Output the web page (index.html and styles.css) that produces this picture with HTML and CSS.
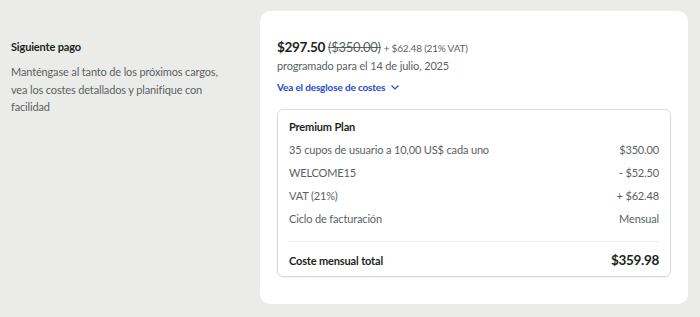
FILE: index.html
```html
<!DOCTYPE html>
<html lang="es">
<head>
  <meta charset="UTF-8" />
  <meta name="viewport" content="width=device-width, initial-scale=1.0" />
  <title>Siguiente pago</title>
  <link rel="stylesheet" href="styles.css">
</head>
<body>
  <div class="page">
    <div class="intro">
      <h2 class="intro-title">Siguiente pago</h2>
      <p class="intro-text">Manténgase al tanto de los próximos cargos, vea los costes detallados y planifique con facilidad</p>
    </div>

    <div class="card">
      <div class="price-line">
        <span class="price">$297.50</span>
        <span class="price-old">($350.00)</span>
        <span class="price-vat">+ $62.48 (21% VAT)</span>
      </div>
      <div class="scheduled">programado para el 14 de julio, 2025</div>
      <a class="breakdown-link" href="#">Vea el desglose de costes
        <svg width="10" height="10" viewBox="0 0 10 10" fill="none"><path d="M1.5 3.5 L5 7 L8.5 3.5" stroke="currentColor" stroke-width="1.2"/></svg>
      </a>

      <!-- desglose -->
      <div class="breakdown">
        <div class="plan-name">Premium Plan</div>
        <div class="row"><span>35 cupos de usuario a 10,00 US$ cada uno</span><span>$350.00</span></div>
        <div class="row"><span>WELCOME15</span><span>- $52.50</span></div>
        <div class="row"><span>VAT (21%)</span><span>+ $62.48</span></div>
        <div class="row"><span>Ciclo de facturación</span><span>Mensual</span></div>
        <div class="total">
          <span class="total-label">Coste mensual total</span>
          <span class="total-value">$359.98</span>
        </div>
      </div>
    </div>
  </div>
</body>
</html>
```

FILE: styles.css
```css
body {
  margin: 0;
  background: #ebecea;
  font-family: Lato, "Noto Sans", sans-serif;
  color: #5c5f62;
  letter-spacing: -0.15px;
}
.page {
  display: flex;
  align-items: flex-start;
  padding: 11px 12px 13px 11px;
}
.intro {
  width: 249px;
  flex: 0 0 auto;
  padding-top: 27px;
}
.intro-title {
  margin: 0 0 7px;
  font-size: 11px;
  line-height: 18px;
  font-weight: 700;
  color: #1d1f21;
}
.intro-text {
  margin: 0;
  font-size: 11px;
  line-height: 17.5px;
  width: 216px;
}
.card {
  flex: 1;
  background: #fff;
  border-radius: 10px;
  padding: 27px 17px 27px;
}
.price-line {
  display: flex;
  align-items: baseline;
  gap: 3px;
  height: 19px;
  font-size: 10px;
  line-height: 19px;
}
.price {
  font-size: 13.5px;
  font-weight: 700;
  letter-spacing: -0.3px;
  color: #1d1f21;
}
.price-old {
  font-size: 13px;
  letter-spacing: -0.3px;
  text-decoration: line-through;
}
.price-vat {
  letter-spacing: -0.2px;
}
.scheduled {
  font-size: 11px;
  line-height: 18px;
}
.breakdown-link {
  display: inline-flex;
  align-items: center;
  gap: 5px;
  margin-top: 2px;
  font-size: 10px;
  line-height: 16px;
  font-weight: 700;
  color: #2b45d3;
  text-decoration: none;
}
.breakdown {
  margin-top: 14px;
  border: 1px solid #d9dadc;
  border-radius: 6px;
  padding: 7px 11px 5px;
  box-shadow: 0 1px 2px rgba(0,0,0,0.06);
}
.plan-name {
  font-size: 11px;
  line-height: 20px;
  font-weight: 700;
  color: #1d1f21;
  margin-bottom: 1px;
}
.row {
  display: flex;
  justify-content: space-between;
  font-size: 11px;
  line-height: 23px;
}
.total {
  display: flex;
  justify-content: space-between;
  align-items: center;
  height: 22px;
  margin-top: 11px;
  padding-top: 7px;
  border-top: 1px solid #eeeff0;
  color: #1d1f21;
  font-weight: 700;
}
.total-label {
  font-size: 11px;
}
.total-value {
  font-size: 13.5px;
  letter-spacing: -0.3px;
}
```
